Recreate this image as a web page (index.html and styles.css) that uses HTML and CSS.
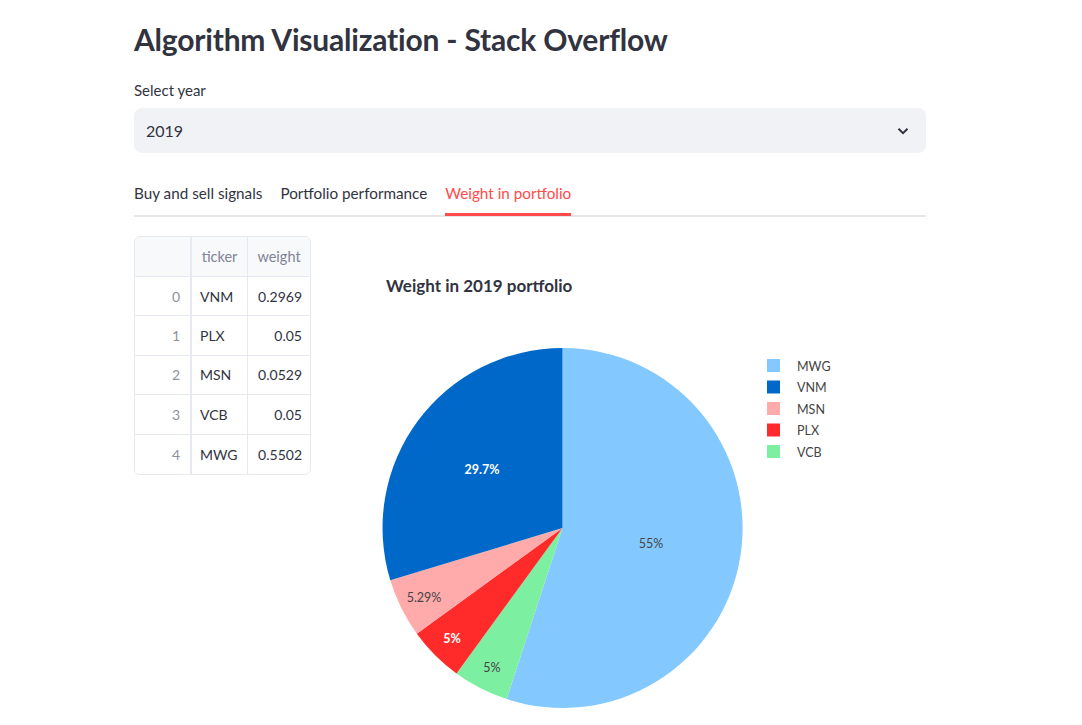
FILE: index.html
```html
<!DOCTYPE html>
<html>
<head>
<meta charset="utf-8">
<link rel="stylesheet" href="styles.css">
</head>
<body>
<div class="main">
  <h1 class="title">Algorithm Visualization - Stack Overflow</h1>
  <div class="field">
    <div class="label">Select year</div>
    <div class="select">
      <span>2019</span>
      <svg class="chev" width="14" height="14" viewBox="0 0 14 14"><path d="M2.5 4.8 L7 9.2 L11.5 4.8" fill="none" stroke="#31333f" stroke-width="2"/></svg>
    </div>
  </div>
  <div class="tabs">
    <div class="tab">Buy and sell signals</div>
    <div class="tab">Portfolio performance</div>
    <div class="tab active">Weight in portfolio</div>
  </div>
  <div class="content">
    <div class="table">
      <div class="row head"><div class="c idx"></div><div class="c tk">ticker</div><div class="c wt">weight</div></div>
      <div class="row"><div class="c idx">0</div><div class="c tk">VNM</div><div class="c wt">0.2969</div></div>
      <div class="row"><div class="c idx">1</div><div class="c tk">PLX</div><div class="c wt">0.05</div></div>
      <div class="row"><div class="c idx">2</div><div class="c tk">MSN</div><div class="c wt">0.0529</div></div>
      <div class="row"><div class="c idx">3</div><div class="c tk">VCB</div><div class="c wt">0.05</div></div>
      <div class="row last"><div class="c idx">4</div><div class="c tk">MWG</div><div class="c wt">0.5502</div></div>
    </div>
    <svg class="chart" width="600" height="488" viewBox="327 237 600 488">
      <text class="ctitle" x="386" y="293">Weight in 2019 portfolio</text>
      <path d="M562.5 529 L562.5 349 A180 180 0 1 1 506.7 700.1 Z" fill="#83c9ff"/>
      <path d="M562.5 529 L506.7 700.1 A180 180 0 0 1 456.5 674.5 Z" fill="#7defa1"/>
      <path d="M562.5 529 L456.5 674.5 A180 180 0 0 1 416.8 634.7 Z" fill="#ff2b2b"/>
      <path d="M562.5 529 L416.8 634.7 A180 180 0 0 1 390.3 581.3 Z" fill="#ffabab"/>
      <path d="M562.5 529 L390.3 581.3 A180 180 0 0 1 562.5 349 Z" fill="#0068c9"/>
      <g class="plab">
        <text x="651" y="549" fill="#444">55%</text>
        <text x="482" y="475" fill="#fff" class="b">29.7%</text>
        <text x="424" y="603" fill="#444">5.29%</text>
        <text x="452" y="644" fill="#fff" class="b">5%</text>
        <text x="492" y="673" fill="#444">5%</text>
      </g>
      <g class="legend">
        <rect x="767" y="360" width="13" height="13" fill="#83c9ff"/><text x="797" y="371.5">MWG</text>
        <rect x="767" y="381.5" width="13" height="13" fill="#0068c9"/><text x="797" y="393">VNM</text>
        <rect x="767" y="403" width="13" height="13" fill="#ffabab"/><text x="797" y="414.5">MSN</text>
        <rect x="767" y="424.5" width="13" height="13" fill="#ff2b2b"/><text x="797" y="436">PLX</text>
        <rect x="767" y="446" width="13" height="13" fill="#7defa1"/><text x="797" y="457.5">VCB</text>
      </g>
    </svg>
  </div>
</div>
</body>
</html>
```

FILE: styles.css
```css
html, body {
  margin: 0;
  padding: 0;
  background: #ffffff;
}
body {
  font-family: "Lato", "Source Sans Pro", sans-serif;
  color: #31333f;
}
.main {
  width: 792px;
  margin-left: 134px;
  padding-top: 19px;
}
.title {
  margin: 0;
  font-size: 30px;
  font-weight: 700;
  line-height: 40px;
  color: #31333f;
  letter-spacing: -0.2px;
}
.field {
  margin-top: 21px;
}
.label {
  font-size: 15px;
  line-height: 20px;
  margin-bottom: 8px;
}
.select {
  height: 45px;
  background: #f0f2f6;
  border-radius: 8px;
  display: flex;
  align-items: center;
  justify-content: space-between;
  padding: 0 16px 0 12px;
  font-size: 16px;
}
.chev {
  display: block;
}
.tabs {
  margin-top: 24px;
  display: flex;
  gap: 18px;
  border-bottom: 2px solid #e6e6e6;
  height: 38px;
}
.tab {
  font-size: 15.25px;
  line-height: 20px;
  padding-top: 6px;
  height: 32px;
}
.tab.active {
  color: #ff4b4b;
  border-bottom: 3px solid #ff4b4b;
  height: 30px;
}
.content {
  margin-top: 19px;
  display: flex;
  align-items: flex-start;
  gap: 16px;
}
.table {
  width: 177px;
  box-sizing: border-box;
  border: 1px solid #e6e9ef;
  border-radius: 6px;
  overflow: hidden;
  font-size: 14px;
  flex: none;
}
.row {
  display: flex;
  height: 39.4px;
  border-bottom: 1px solid #e6e9ef;
  box-sizing: border-box;
}
.row.head {
  height: 40px;
  background: #f8f9fb;
  color: #808495;
  font-size: 14.5px;
}
.row.last {
  border-bottom: none;
}
.c {
  display: flex;
  align-items: center;
  padding: 0 8px;
}
.idx {
  width: 57px;
  box-sizing: border-box;
  justify-content: flex-end;
  color: #8e919c;
  background: #f8f9fb;
  border-right: 2px solid #e6e9ef;
  padding-right: 10px;
}
.row:not(.head) .idx {
  background: #ffffff;
}
.tk {
  width: 56px;
  box-sizing: border-box;
  border-right: 1px solid #e6e9ef;
}
.wt {
  flex: 1;
  justify-content: flex-end;
}
.head .tk, .head .wt {
  justify-content: center;
}
.chart {
  display: block;
  flex: none;
}
.ctitle {
  font-size: 17px;
  font-weight: 700;
  fill: #31333f;
}
.plab text {
  font-size: 12.5px;
  text-anchor: middle;
}
.plab text.b {
  font-weight: 700;
}
.legend text {
  font-size: 12.5px;
  fill: #444;
}
```
